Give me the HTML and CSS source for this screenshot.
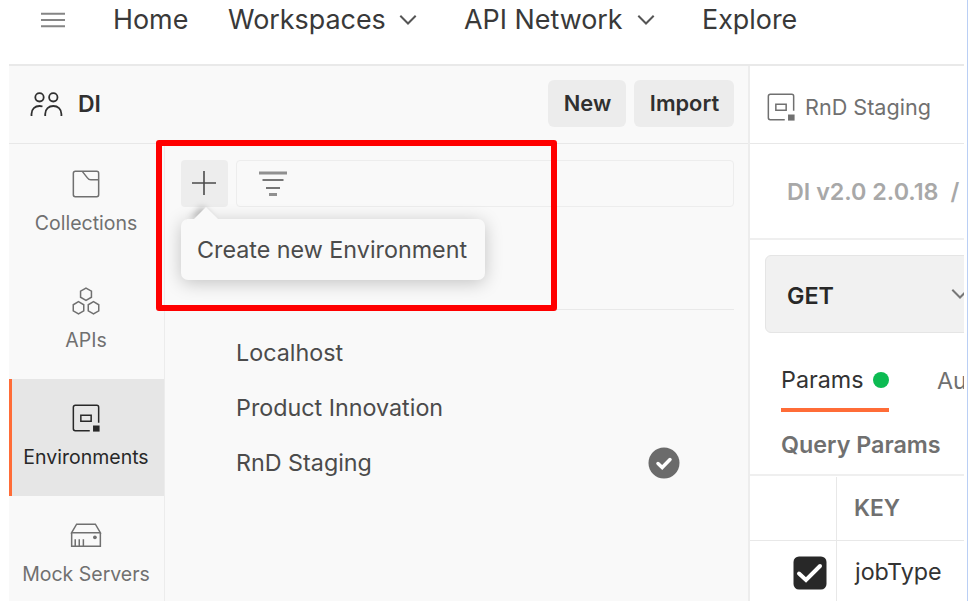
FILE: index.html
```
<!DOCTYPE html>
<html lang="en">
<head>
<meta charset="utf-8">
<title>Environments</title>
<link rel="stylesheet" href="styles.css">
</head>
<body>
<div class="app">
  <header class="topbar">
    <svg class="menu" width="24" height="16" viewBox="0 0 24 16"><path d="M0 1.700h24M0 8h24M0 14.200h24"/></svg>
    <a class="top home">Home</a>
    <a class="top workspaces">Workspaces</a>
    <svg class="chev" width="18" height="12" viewBox="0 0 18 12"><path d="M1.300 1.800l7.700 7.700 7.700-7.700"/></svg>
    <a class="top network">API Network</a>
    <svg class="chev" width="18" height="12" viewBox="0 0 18 12"><path d="M1.300 1.800l7.700 7.700 7.700-7.700"/></svg>
    <a class="top explore">Explore</a>
  </header>
  <div class="body">
    <section class="side">
      <div class="sidehead">
        <svg class="people" width="34" height="28" viewBox="0 0 34 28"><circle cx="9.500" cy="6.300" r="4.200"/><circle cx="23.300" cy="6.300" r="4.200"/><path d="M1.500 25v-2c0-5 3.500-8 8-8 1.100 0 2.100.2 3 .5M15.200 25v-2c0-5 3.600-8 8.100-8s8.100 3 8.100 8v2"/></svg>
        <span class="wsname">DI</span>
        <button class="btn new">New</button>
        <button class="btn import">Import</button>
      </div>
      <div class="sidebody">
        <nav class="rail">
          <div class="item"><svg width="30" height="30" viewBox="0 0 32 32"><path d="M4.500 2.500h23a2 2 0 0 1 2 2v23a2 2 0 0 1-2 2h-23a2 2 0 0 1-2-2v-23a2 2 0 0 1 2-2zM12 2.500l5.500 7q1.500 2 3.500 2h8.500"/></svg><span class="collections">Collections</span></div>
          <div class="item"><svg width="30" height="30" viewBox="0 0 32 32"><path d="M16 2.200l5.800 3.300v6.500l-5.800 3.300-5.800-3.300V5.500zM8 16.700l5.600 3.300v6.500L8 29.800l-5.600-3.300V20zM24 16.700l5.600 3.300v6.500L24 29.800l-5.600-3.300V20z"/></svg><span class="apis">APIs</span></div>
          <div class="item active"><svg width="30" height="30" viewBox="0 0 32 32"><path d="M20 29.500H4.500a2 2 0 0 1-2-2v-23a2 2 0 0 1 2-2h23a2 2 0 0 1 2 2V21M10.500 13h11v6.500h-11z"/><path class="solid" d="M23.500 24h7v6.500h-7z"/></svg><span class="environments">Environments</span></div>
          <div class="item"><svg class="server" width="32" height="30" viewBox="0 0 34 32"><path d="M1.700 13.500L7 4.500h20l5.300 9zM1.700 13.500v14.500h30.600V13.500M5.500 20.500V28M9.800 20.500V28M14.200 20.500V28"/><circle class="solid" cx="26.500" cy="18.500" r="2"/></svg><span class="mock">Mock Servers</span></div>
        </nav>
        <div class="envs">
          <div class="tools">
            <div class="add"><svg width="26" height="26" viewBox="0 0 26 26"><path d="M13 1v24M1 13h24"/></svg>
              <div class="tip"><span>Create new Environment</span></div>
            </div>
            <div class="filter"><svg width="28" height="26" viewBox="0 0 28 26"><path class="wide" d="M0 2h28M10 23.500h8"/><path d="M3.500 9h21M7 17h14"/></svg></div>
          </div>
          <ul class="list">
            <li><span>Localhost</span></li>
            <li><span>Product Innovation</span></li>
            <li><span>RnD Staging</span><svg class="check" width="32" height="32" viewBox="0 0 32 32"><circle cx="16" cy="16" r="15.500"/><path d="M10 16.500l4.200 4 7.800-8"/></svg></li>
          </ul>
          <div class="highlight"></div>
        </div>
      </div>
    </section>
    <main class="main">
      <div class="tab"><svg width="30" height="30" viewBox="0 0 32 32"><path d="M20 29.500H4.500a2 2 0 0 1-2-2v-23a2 2 0 0 1 2-2h23a2 2 0 0 1 2 2V20M10.500 13h11v6.500h-11z"/><path class="solid" d="M23.500 24h7v6.500h-7z"/></svg><span>RnD Staging</span></div>
      <div class="crumb"><span>DI v2.0 2.0.18</span><span>/</span></div>
      <div class="request"><div class="method"><span class="get">GET</span><svg width="18" height="12" viewBox="0 0 18 12"><path d="M1.300 1.800l7.700 7.700 7.700-7.700"/></svg></div></div>
      <div class="tabs"><div class="params"><span>Params</span><i class="dot"></i></div><span class="auth">Au</span></div>
      <div class="query"><span>Query Params</span></div>
      <div class="row head"><div class="cell"></div><div class="key"><span>KEY</span></div></div>
      <div class="row"><div class="cell"><svg width="34" height="34" viewBox="0 0 34 34"><rect x=".5" y=".5" width="33" height="33" rx="5.500"/><path d="M6 17.500l7 6.500L27 10"/></svg></div><div class="key"><span class="job">jobType</span></div></div>
    </main>
  </div>
</div>
</body>
</html>
```
FILE: styles.css
```
* { box-sizing: border-box; }
html, body { margin: 0; height: 601px; overflow: hidden; background: #fff; }
body { border-right: 1px solid #bacff5; padding: 0 3px 0 9px; font-family: Inter, "Liberation Sans", sans-serif; font-size: 22px; color: #4a4a4a; }
svg { display: block; flex: none; fill: none; stroke: currentColor; stroke-width: 1.600; }
span, a { white-space: nowrap; }
.app { height: 601px; overflow: hidden; display: flex; flex-direction: column; }
.topbar { height: 66px; flex: none; border-bottom: 2px solid #e9e9e9; padding: 0 0 27px 32px; display: flex; align-items: center; font-size: 26.900px; color: #393939; }
.menu { color: #858585; margin-top: 3px; stroke-width: 2; }
.top { font-weight: 380; }
.home { margin-left: 48px; width: 76px; }
.workspaces { margin-left: 39px; width: 158px; }
.network { width: 160px; }
.chev { margin: 2px 0 0 13px; stroke-width: 2; color: #555; }
.chev + .top { margin-left: 47px; }
.body { flex: 1; display: flex; min-height: 0; }
.side { width: 741px; flex: none; background: #f9f9f9; border-right: 2px solid #ededed; display: flex; flex-direction: column; }
.sidehead { height: 78px; flex: none; border-bottom: 1px solid #e8e8e8; padding: 0 14px 3px 21px; display: flex; align-items: center; color: #303030; }
.people { stroke-width: 1.800; margin-top: 3px; }
.wsname { margin: 2px auto 0 14px; font-weight: 600; font-size: 23px; }
.btn { border: 0; border-radius: 6px; height: 47px; background: #ececec; color: #303030; font: inherit; font-weight: 600; font-size: 21.800px; padding: 0 0 0 1px; white-space: nowrap; }
.new { width: 78px; }
.import { width: 100px; margin-left: 8px; }
.sidebody { flex: 1; display: flex; min-height: 0; }
.rail { width: 156px; flex: none; border-right: 1px solid #ececec; padding-top: 1px; font-size: 19.500px; color: #707070; }
.item { height: 117px; display: flex; flex-direction: column; align-items: center; padding: 24px 2px 0 0; gap: 12px; }
.item span { line-height: 24px; margin-left: 1px; }
.item.active { background: #e6e6e6; border-left: 3px solid #ff6c37; padding-right: 5px; color: #282828; }
.solid { fill: currentColor; stroke: none; }
.envs { flex: 1; position: relative; padding: 16px 14px 0 16px; color: #4b4b4b; font-size: 23.300px; }
.tools { display: flex; gap: 8px; height: 150px; border-bottom: 1px solid #e9e9e9; }
.add { width: 47px; height: 47px; background: #ededed; border-radius: 4px; padding: 10px 0 0 10px; position: relative; }
.filter { flex: 1; height: 47px; border: 1px solid #ededed; border-radius: 4px; padding: 10px 0 0 22px; }
.wide { stroke-width: 2.800; stroke: #909090; }
.tip { position: absolute; left: 0; top: 59px; width: 304px; height: 61px; border-radius: 7px; background: #f9f9f9; box-shadow: 0 3px 18px rgba(0,0,0,.22); display: flex; align-items: center; padding-left: 16px; }
.tip::before { content: ""; position: absolute; left: 13px; top: -12px; border: solid transparent; border-width: 0 12px 12px; border-bottom-color: #f9f9f9; filter: drop-shadow(-4px -1px 3px rgba(0,0,0,.25)); }
.tip::after { content: ""; position: absolute; left: 6px; top: 0; width: 40px; height: 10px; background: #f9f9f9; }
.list { list-style: none; margin: 0; padding: 15px 0 0 55px; }
.list li { height: 55px; display: flex; align-items: center; }
.check { margin: 0 54px 0 auto; }
.check circle { fill: #6b6b6b; stroke: none; }
.check path { stroke: #fff; stroke-width: 3.500; stroke-linecap: round; }
.highlight { position: absolute; left: -9px; top: -4px; width: 401px; height: 171px; border: 6px solid #f00; border-radius: 3px; pointer-events: none; }
.main { flex: 1; min-width: 0; overflow: hidden; color: #707070; font-size: 23.300px; }
.tab { height: 78px; border-bottom: 1px solid #e8e8e8; padding: 4px 0 0 16px; display: flex; align-items: center; gap: 9px; font-size: 21.600px; }
.crumb { height: 96px; border-bottom: 2px solid #efefef; padding: 1px 0 0 37px; display: flex; align-items: center; gap: 12px; font-weight: 600; color: #a8a8a8; }
.request { height: 110px; padding: 15px 0 0 15px; }
.method { width: 240px; height: 78px; border: 1px solid #e5e5e5; border-radius: 6px; background: #f1f1f1; display: flex; align-items: center; padding: 2px 0 0 21px; font-weight: 600; color: #282828; }
.get { width: 164px; }
.method svg { color: #777; stroke-width: 2; margin-top: -2px; }
.tabs { height: 62px; display: flex; padding-left: 31px; }
.params { width: 108px; flex: none; height: 62px; border-bottom: 4px solid #ff6c37; display: flex; align-items: center; justify-content: space-between; color: #333; padding-top: 1px; }
.dot { width: 16px; height: 16px; border-radius: 50%; background: #0cbb52; }
.auth { margin: 16px 0 0 48px; }
.query { height: 64px; border-bottom: 2px solid #efefef; padding: 2px 0 0 31px; display: flex; align-items: center; font-weight: 600; }
.row { height: 65px; display: flex; }
.head { border-bottom: 1px solid #e8e8e8; padding-top: 1px; font-weight: 600; font-size: 22.800px; }
.cell { width: 87px; border-right: 1px solid #e8e8e8; padding: 15px 0 0 43px; }
.key { padding: 0 0 2px 17px; display: flex; align-items: center; }
.cell rect { fill: #282828; stroke: none; }
.cell path { stroke: #fff; stroke-width: 4; stroke-linecap: round; }
.job { color: #333; margin: -2px 0 0 1px; }
```
